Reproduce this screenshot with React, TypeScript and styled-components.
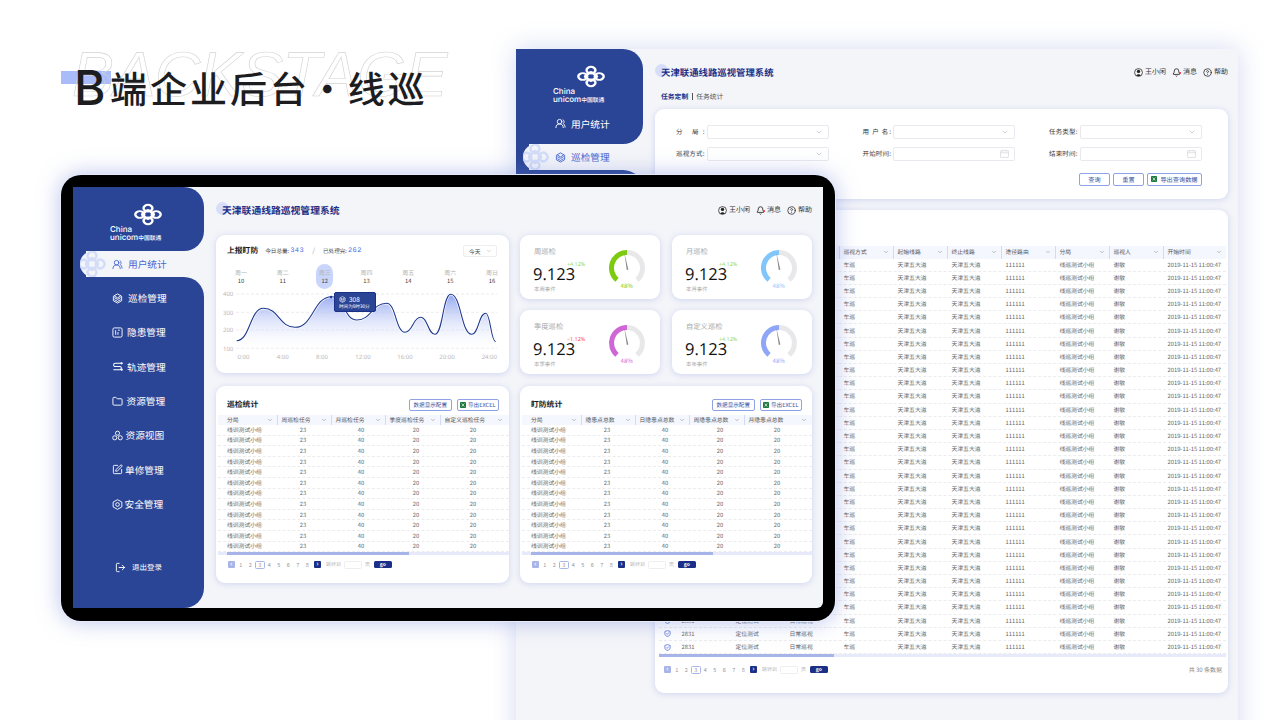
import React from "react";
import styled, { createGlobalStyle } from "styled-components";
import { Bell, ChevronDown, CircleHelp, Folder, LogOut, SquarePen, UsersRound } from "lucide-react";

const BLUE = "#2b4596";
const NAVY = "#1c2f86";
const SCREEN = "#f4f5f9";

/* icons */

const Knot = ({ color = "#fff", width = 30, height = 23 }: { color?: string; width?: number; height?: number }) => (
  <svg width={width} height={height} viewBox="-20 -16 40 32" preserveAspectRatio="none">
    <g transform="scale(1 .8) rotate(45)" fill="none" stroke={color} strokeWidth="3.400">
      <rect x="2" y="2" width="11.500" height="11.500" rx="5.500" />
      <rect x="-13.500" y="2" width="11.500" height="11.500" rx="5.500" />
      <rect x="2" y="-13.500" width="11.500" height="11.500" rx="5.500" />
      <rect x="-13.500" y="-13.500" width="11.500" height="11.500" rx="5.500" />
      <rect x="-6" y="-6" width="12" height="12" rx="2" />
    </g>
  </svg>
);

const CubeIcon = ({ size = 11 }: { size?: number }) => (
  <svg width={size} height={size} viewBox="0 0 24 24" fill="none" stroke="currentColor" strokeWidth="2">
    <path d="M12 2l9 5v10l-9 5-9-5V7z" />
    <path d="M5 10l7 4 7-4M5 14.500l7 4 7-4M5 6.500l7 4 7-4" />
  </svg>
);

const BarsIcon = () => (
  <svg width="11" height="11" viewBox="0 0 24 24" fill="none" stroke="currentColor" strokeWidth="2">
    <rect x="2" y="2" width="20" height="20" rx="3" />
    <path d="M8 7v10M13 11v6M13 7h4" />
  </svg>
);

const RouteIcon = () => (
  <svg width="11" height="11" viewBox="0 0 24 24" fill="none" stroke="currentColor" strokeWidth="2.200">
    <path d="M21 5H7a3.500 3.500 0 0 0 0 7h10a3.500 3.500 0 0 1 0 7H3" />
    <circle cx="21" cy="5" r="1.400" fill="currentColor" />
    <circle cx="21" cy="19" r="1.400" fill="currentColor" />
  </svg>
);

const ViewIcon = () => (
  <svg width="11" height="11" viewBox="0 0 24 24" fill="none" stroke="currentColor" strokeWidth="2">
    <circle cx="12" cy="7" r="4.500" />
    <circle cx="6" cy="17" r="4.500" />
    <circle cx="18" cy="17" r="4.500" />
  </svg>
);

const ShieldGearIcon = () => (
  <svg width="11" height="11" viewBox="0 0 24 24" fill="none" stroke="currentColor" strokeWidth="2">
    <path d="M12 1.500l9.500 5.200v10.600L12 22.500l-9.500-5.200V6.700z" />
    <circle cx="12" cy="12" r="4" />
  </svg>
);

const UserBadge = () => (
  <svg width="9" height="9" viewBox="0 0 24 24">
    <circle cx="12" cy="12" r="10.500" fill="none" stroke="#222" strokeWidth="2" />
    <circle cx="12" cy="9" r="4.500" fill="#222" />
    <path d="M6 21c1-6 11-6 12 0z" fill="#222" />
  </svg>
);

const ExcelIcon = () => (
  <svg width="6" height="6" viewBox="0 0 12 12">
    <rect width="12" height="12" rx="1.500" fill="#1f7a3f" />
    <path d="M3.500 3l5 6M8.500 3l-5 6" stroke="#fff" strokeWidth="1.400" />
  </svg>
);

const CheckShield = () => (
  <svg width="7" height="7" viewBox="0 0 24 24" fill="none" stroke="#4a68d4" strokeWidth="2.600">
    <path d="M12 2l9 3v8c0 5-4 8-9 9-5-1-9-4-9-9V5z" />
    <path d="M8 12l3 3 5-6" />
  </svg>
);

const CalendarIcon = () => (
  <svg width="9" height="9" viewBox="0 0 24 24" fill="none" stroke="#c9ccd4" strokeWidth="1.600">
    <rect x="2" y="5" width="20" height="17" />
    <path d="M2 10h20M7 2v4M17 2v4" />
  </svg>
);

/* sidebar */

const LogoMark = () => (
  <Logo>
    <KnotSlot>
      <Knot />
    </KnotSlot>
    <LogoChina>China</LogoChina>
    <LogoUnicom>
      unicom<small>中国联通</small>
    </LogoUnicom>
  </Logo>
);

const NavRow = ({ icon, label, gap = 5, active }: { icon: React.ReactNode; label: string; gap?: number; active?: boolean }) =>
  active ? (
    <ActiveBand>
      <ActivePill>
        <Watermark>
          <Knot color="#d3dcf8" width={30} height={30} />
        </Watermark>
        <NavIcon>{icon}</NavIcon>
        <span>{label}</span>
      </ActivePill>
    </ActiveBand>
  ) : (
    <NavItem $gap={gap}>
      <NavIcon>{icon}</NavIcon>
      <span>{label}</span>
    </NavItem>
  );

const TopBar = () => (
  <Links>
    <LinkItem>
      <UserBadge />
      王小闲
    </LinkItem>
    <LinkItem>
      <BellWrap>
        <Bell size={9} color="#222" strokeWidth={2.200} />
        <RedDot />
      </BellWrap>
      消息
    </LinkItem>
    <LinkItem>
      <CircleHelp size={9} color="#222" strokeWidth={2} />
      帮助
    </LinkItem>
  </Links>
);

/* filter */

const FilterField = ({ label, date }: { label: string; date?: boolean }) => (
  <FieldGroup>
    <FieldLabel>{label}</FieldLabel>
    <Field>{date ? <CalendarIcon /> : <ChevronDown size={8} color="#b5b8c0" />}</Field>
  </FieldGroup>
);

/* tables */

const HeadChevron = () => <ChevronDown size={6} color="#999" strokeWidth={2.500} />;

const DataTable = ({
  cols,
  bodyCols,
  head,
  rows,
  rowHeight,
  centered,
}: {
  cols: string;
  bodyCols?: string;
  head: string[];
  rows: React.ReactNode[][];
  rowHeight: number;
  centered?: boolean;
}) => (
  <div>
    <HeadRow $cols={cols} $height={rowHeight < 12 ? 10 : 12.500}>
      {head.map((h, i) => (
        <HeadCell key={i} $first={i === 0}>
          <span>{h}</span>
          {h && <HeadChevron />}
        </HeadCell>
      ))}
    </HeadRow>
    {rows.map((r, i) => (
      <BodyRow key={i} $cols={bodyCols ?? cols} $height={rowHeight}>
        {r.map((c, j) => (
          <BodyCell key={j} $center={!!centered && j > 0} $first={centered ? j === 0 : false}>
            {c}
          </BodyCell>
        ))}
      </BodyRow>
    ))}
  </div>
);

const Pagination = () => (
  <Pager>
    <PageArrow $dark={false}>‹</PageArrow>
    {[1, 2, 3, 4, 5, 6, 7, 8].map((n) => (
      <PageNum key={n} $current={n === 3}>
        {n}
      </PageNum>
    ))}
    <PageArrow $dark>›</PageArrow>
    <JumpLabel>跳转到</JumpLabel>
    <JumpInput />
    <JumpLabel>页</JumpLabel>
    <GoButton>go</GoButton>
  </Pager>
);

const ScrollBar = ({ inset, thumb }: { inset: number; thumb: number }) => (
  <Track>
    <Thumb style={{ marginLeft: inset, width: thumb }} />
  </Track>
);

const TableCard = ({ title, head }: { title: string; head: string[] }) => (
  <Card>
    <TableHead>
      <CardTitle>{title}</CardTitle>
      <HeadButtons>
        <OutlineButton>数据显示配置</OutlineButton>
        <OutlineButton>
          <ExcelIcon />
          导出EXCEL
        </OutlineButton>
      </HeadButtons>
    </TableHead>
    <TableInset>
      <DataTable
        cols="59px 54px 54px 55px 67px"
        bodyCols="59px 52px 64px 46px 68px"
        head={head}
        rowHeight={10.600}
        centered
        rows={Array.from({ length: 12 }, () => ["线训测试小组", "23", "40", "20", "20"])}
      />
      <ScrollBar inset={9} thumb={182} />
    </TableInset>
    <PagerSlot>
      <Pagination />
    </PagerSlot>
  </Card>
);

/* chart */

const curve: [number, number][] = [
  [236.700, 340.700], [263.300, 308.300], [295, 327.300], [331.700, 296.700], [356.700, 320], [386.700, 303.300],
  [405, 332.300], [420.700, 317.300], [435, 334.300], [450.700, 294.300], [471.700, 334.300], [485.700, 313.300], [495.700, 341.700],
];

const curvePath = curve.reduce((d, [x, y], i) => {
  if (i === 0) return `M${x} ${y}`;
  const [px, py] = curve[i - 1];
  const h = (x - px) / 2;
  return `${d} C${px + h} ${py} ${x - h} ${y} ${x} ${y}`;
}, "");

const Chart = () => (
  <ChartSvg viewBox="216 289 293 76" width="293" height="76">
    <defs>
      <linearGradient id="area" x1="0" y1="0" x2="0" y2="1">
        <stop offset="0" stopColor="#93a7f0" />
        <stop offset="1" stopColor="#ffffff" stopOpacity="0.1" />
      </linearGradient>
    </defs>
    {[[294, "400"], [312.300, "300"], [330, "200"], [348.300, "100"]].map(([y, t]) => (
      <g key={t as string}>
        <line x1="236" x2="497" y1={y} y2={y} stroke="#e3e3e6" strokeWidth="0.700" strokeDasharray="3 2" />
        <text x="223" y={(y as number) + 2.200} fontSize="6" fill="#b9b9b9">
          {t}
        </text>
      </g>
    ))}
    <path d={`${curvePath} L495.700 350 L236.700 350 Z`} fill="url(#area)" />
    <path d={curvePath} fill="none" stroke="#fff" strokeWidth="2.400" />
    <path d={curvePath} fill="none" stroke="#1f3a8f" strokeWidth="1.100" />
    <circle cx="331" cy="297" r="1.200" fill="#1f3a8f" />
    {[["0:00", 243.500], ["4:00", 282.700], ["8:00", 322], ["12:00", 363], ["16:00", 405], ["20:00", 447], ["24:00", 489.300]].map(([t, x]) => (
      <text key={t as string} x={x} y="359" fontSize="6" fill="#b9b9b9" textAnchor="middle">
        {t}
      </text>
    ))}
  </ChartSvg>
);

const Gauge = ({ color }: { color: string }) => (
  <svg width="40" height="40" viewBox="0 0 40 40">
    <path d="M20 4.500A15.500 15.500 0 0 1 29.970 31.870" fill="none" stroke="#e8e8ea" strokeWidth="5" />
    <path d="M10.030 31.870A15.500 15.500 0 0 1 20 4.500" fill="none" stroke={color} strokeWidth="5" />
    <polygon points="17.300,5 19.800,22 21.400,21.600" fill="#8a8a8a" />
  </svg>
);

const StatCard = ({ title, foot, delta, color, down }: { title: string; foot: string; delta: string; color: string; down?: boolean }) => (
  <StatBox>
    <div>
      <StatTitle>{title}</StatTitle>
      <StatValue>
        9.123
        <StatDelta $down={!!down}>{delta}</StatDelta>
      </StatValue>
      <StatFoot>{foot}</StatFoot>
    </div>
    <GaugeCol>
      <Gauge color={color} />
      <GaugePct $color={color}>48%</GaugePct>
    </GaugeCol>
  </StatBox>
);

const week = [["周一", 10], ["周二", 11], ["周三", 12], ["周四", 13], ["周五", 14], ["周六", 15], ["周日", 16]];

const backRows = Array.from({ length: 30 }, () => [
  <CheckShield key="c" />, "2831", "定位测试", "日常巡视", "车巡", "天津五大道", "天津五大道", "111111", "线巡测试小组", "谢敏", "2019-11-15 11:00:47",
]);

const App = () => (
  <>
    <GlobalStyle />
    <Canvas>
      <Heading>
        <HeadingBar />
        <HeadingGhost>BACKSTAGE</HeadingGhost>
        <HeadingText>
          <HeadingLatin>B</HeadingLatin>端企业后台 · 线巡
        </HeadingText>
      </Heading>

      <BackWindow>
        <BackSide>
          <SideTop $height={95}>
            <LogoMark />
            <BackFirstItem>
              <NavRow icon={<UsersRound size={11} />} label="用户统计" />
            </BackFirstItem>
          </SideTop>
          <NavRow active icon={<CubeIcon />} label="巡检管理" />
          <SideBottom />
        </BackSide>
        <BackMain>
          <PageHeader $height={38}>
            <PageTitle $size={9.400}>天津联通线路巡视管理系统</PageTitle>
            <TopBar />
          </PageHeader>
          <Tabs>
            <TabOn>任务定制</TabOn>
            <TabSep />
            <span>任务统计</span>
          </Tabs>
          <FilterCard>
            <FilterGrid>
              <FilterField label="分 局:" />
              <FilterField label="用 户 名:" />
              <FilterField label="任务类型:" />
              <FilterField label="巡视方式:" />
              <FilterField label="开始时间:" date />
              <FilterField label="结束时间:" date />
            </FilterGrid>
            <FilterActions>
              <ActionButton $width={31}>查询</ActionButton>
              <ActionButton $width={31}>重置</ActionButton>
              <ActionButton $width={55}>
                <ExcelIcon />
                导出查询数据
              </ActionButton>
            </FilterActions>
          </FilterCard>
          <BackTableCard>
            <DataTable
              cols="18px repeat(9, 54px) 63px"
              head={["", "编号", "任务名称", "巡视类型", "巡视方式", "起始线路", "终止线路", "途径路由", "分局", "巡视人", "开始时间"]}
              rows={backRows}
              rowHeight={13.200}
            />
            <ScrollBar inset={0} thumb={175} />
            <BackPagerRow>
              <Pagination />
              <Total>共 30 条数据</Total>
            </BackPagerRow>
          </BackTableCard>
        </BackMain>
      </BackWindow>

      <Tablet>
        <Screen>
          <Side>
            <SideTop $height={64}>
              <LogoMark />
            </SideTop>
            <NavRow active icon={<UsersRound size={11} />} label="用户统计" />
            <SideBottom>
              <NavRow icon={<CubeIcon />} label="巡检管理" />
              <NavRow icon={<BarsIcon />} label="隐患管理" gap={4} />
              <NavRow icon={<RouteIcon />} label="轨迹管理" gap={4} />
              <NavRow icon={<Folder size={11} />} label="资源管理" gap={3.500} />
              <NavRow icon={<ViewIcon />} label="资源视图" gap={2.500} />
              <NavRow icon={<SquarePen size={11} />} label="单修管理" gap={2} />
              <NavRow icon={<ShieldGearIcon />} label="安全管理" gap={1.500} />
              <LogoutRow>
                <LogOut size={11} />
                退出登录
              </LogoutRow>
            </SideBottom>
          </Side>
          <Main>
            <PageHeader $height={48}>
              <PageTitle $size={9.800}>天津联通线路巡视管理系统</PageTitle>
              <TopBar />
            </PageHeader>
            <TopGrid>
              <ChartCard>
                <ChartHead>
                  <CardTitle>上报盯防</CardTitle>
                  <Meta>今日总量:</Meta>
                  <MetaValue>343</MetaValue>
                  <MetaSlash>/</MetaSlash>
                  <Meta>已处理完:</Meta>
                  <MetaValue>262</MetaValue>
                  <RangeSelect>
                    今天
                    <ChevronDown size={6} color="#aaa" />
                  </RangeSelect>
                </ChartHead>
                <Week>
                  {week.map(([d, n]) => (
                    <Day key={d} $on={n === 12}>
                      <DayName>{d}</DayName>
                      <DayNum>{n}</DayNum>
                    </Day>
                  ))}
                </Week>
                <Chart />
                <Tip>
                  <TipTop>
                    <CubeIcon size={7} />
                    308
                  </TipTop>
                  <TipSub>时间为9时30分</TipSub>
                </Tip>
              </ChartCard>
              <StatGrid>
                <StatCard title="周巡检" foot="本周事件" delta="+4.12%" color="#7ccb0f" />
                <StatCard title="月巡检" foot="本月事件" delta="+4.12%" color="#80c6fa" />
                <StatCard title="季度巡检" foot="本季事件" delta="−1.12%" color="#cf66d6" down />
                <StatCard title="自定义巡检" foot="本年事件" delta="+4.12%" color="#8ea5f8" />
              </StatGrid>
            </TopGrid>
            <BottomGrid>
              <TableCard title="巡检统计" head={["分局", "周巡检任务", "月巡检任务", "季度巡检任务", "自定义巡检任务"]} />
              <TableCard title="盯防统计" head={["分局", "隐患点总数", "日隐患点总数", "周隐患点总数", "月隐患点总数"]} />
            </BottomGrid>
          </Main>
        </Screen>
      </Tablet>
    </Canvas>
  </>
);

/**
 * styles
 */

const GlobalStyle = createGlobalStyle`
  html, body {
    margin: 0;
    background: #fff;
    font-family: "Noto Sans CJK SC", "Noto Sans", sans-serif;
    text-rendering: geometricPrecision;
  }
`;

const Canvas = styled.div`
  position: relative;
  width: 1280px;
  height: 720px;
  overflow: hidden;
  background: #fff;
  opacity: 0.999;
`;

const Heading = styled.div`
  position: absolute;
  left: 61px;
  top: 50px;
  width: 400px;
  height: 70px;
`;

const HeadingBar = styled.div`
  position: absolute;
  left: 0;
  top: 21px;
  width: 50px;
  height: 13px;
  background: #a9bcf9;
`;

const HeadingGhost = styled.div`
  position: absolute;
  left: 11px;
  top: -11px;
  font-family: "Liberation Sans", sans-serif;
  font-style: italic;
  font-size: 63px;
  line-height: 72px;
  letter-spacing: -0.600px;
  color: transparent;
  -webkit-text-stroke: 0.600px #d2d2d2;
  white-space: nowrap;
`;

const HeadingText = styled.div`
  position: absolute;
  left: 13px;
  top: 10px;
  font-size: 37px;
  line-height: 54px;
  font-weight: 500;
  letter-spacing: 3px;
  word-spacing: -12.500px;
  color: #1d1d1f;
  white-space: nowrap;
`;

const HeadingLatin = styled.span`
  display: inline-block;
  position: relative;
  top: 2px;
  width: 36px;
  font-family: "Inter", sans-serif;
  font-size: 48px;
  line-height: 40px;
  font-weight: 500;
  letter-spacing: 0;
`;

const Tablet = styled.div`
  position: absolute;
  left: 61px;
  top: 175px;
  width: 750px;
  height: 421px;
  padding: 12px 12px 13px;
  background: #000;
  border-radius: 20px;
  box-shadow: 0 0 0 1px #e4e9fb, 0 0 22px rgba(110, 130, 215, 0.5);
`;

const Screen = styled.div`
  display: flex;
  width: 750px;
  height: 421px;
  background: ${SCREEN};
  border-radius: 0 0 6px 0;
  overflow: hidden;
`;

const Side = styled.div`
  width: 131px;
  flex: none;
  display: flex;
  flex-direction: column;
`;

const BackWindow = styled.div`
  position: absolute;
  left: 516px;
  top: 49px;
  width: 722px;
  height: 700px;
  display: flex;
  align-items: flex-start;
  background: ${SCREEN};
  box-shadow: 0 0 24px rgba(120, 140, 215, 0.32);
`;

const BackSide = styled(Side)`
  width: 127px;
  height: 500px;
`;

const SideTop = styled.div<{ $height: number }>`
  height: ${(p) => p.$height}px;
  padding-top: 16px;
  box-sizing: border-box;
  position: relative;
  background: ${BLUE};
  border-radius: 0 20px 20px 0;
  border-bottom-left-radius: 0;
`;

const SideBottom = styled.div`
  flex: 1;
  padding-top: 4px;
  background: ${BLUE};
  border-radius: 0 20px 20px 0;
`;

const BackFirstItem = styled.div`
  position: absolute;
  left: 0;
  right: 0;
  bottom: 3px;
`;

const Logo = styled.div`
  width: 53px;
  margin-left: 37px;
  color: #fff;
  font-family: "Inter", sans-serif;
  font-weight: 500;
`;

const KnotSlot = styled.div`
  display: flex;
  justify-content: flex-end;
  height: 22px;
`;

const LogoChina = styled.div`
  font-size: 8px;
  line-height: 7px;
  margin-top: 1px;
`;

const LogoUnicom = styled.div`
  font-size: 8px;
  line-height: 8px;
  white-space: nowrap;

  small {
    font-family: "Noto Sans CJK SC", sans-serif;
    font-size: 5.800px;
  }
`;

const NavIcon = styled.span`
  display: flex;
  width: 11px;
  height: 11px;
  flex: none;
`;

const NavItem = styled.div<{ $gap: number }>`
  height: 34.330px;
  padding-left: 39px;
  display: flex;
  align-items: center;
  gap: ${(p) => p.$gap}px;
  font-size: 9.700px;
  color: #fff;
  white-space: nowrap;
`;

const LogoutRow = styled.div`
  height: 34px;
  margin-top: 29px;
  padding-left: 42px;
  display: flex;
  align-items: center;
  gap: 6px;
  font-size: 7.500px;
  color: #fff;
`;

const ActiveBand = styled.div`
  height: 26px;
  flex: none;
  padding-left: 7px;
  background: linear-gradient(90deg, ${BLUE} 13px, ${SCREEN} 13px);
`;

const ActivePill = styled.div`
  position: relative;
  height: 26px;
  padding-left: 32px;
  display: flex;
  align-items: center;
  gap: 5px;
  overflow: hidden;
  font-size: 9.700px;
  color: #4a68d4;
  white-space: nowrap;
  background: ${SCREEN};
  border-radius: 13px 0 0 13px;
`;

const Watermark = styled.div`
  position: absolute;
  left: -3px;
  top: -2px;
`;

const Main = styled.div`
  flex: 1;
  padding: 0 11px 0 12px;
`;

const BackMain = styled.div`
  flex: 1;
  min-width: 0;
  padding: 0 10px 0 12px;
`;

const PageHeader = styled.div<{ $height: number }>`
  height: ${(p) => p.$height}px;
  padding-top: 15px;
  box-sizing: border-box;
  display: flex;
  justify-content: space-between;
  align-items: flex-start;
`;

const PageTitle = styled.div<{ $size: number }>`
  position: relative;
  isolation: isolate;
  margin-left: 6px;
  font-size: ${(p) => p.$size}px;
  line-height: 16px;
  font-weight: 700;
  color: ${NAVY};
  white-space: nowrap;

  &::before {
    content: "";
    position: absolute;
    z-index: -1;
    left: -6px;
    top: 0;
    width: 13px;
    height: 13px;
    border-radius: 50%;
    background: #d7def9;
  }
`;

const Links = styled.div`
  display: flex;
  gap: 6px;
  padding-top: 3px;
`;

const LinkItem = styled.div`
  display: flex;
  align-items: center;
  gap: 2px;
  font-size: 7px;
  line-height: 10px;
  color: #333;
`;

const BellWrap = styled.span`
  position: relative;
  display: flex;
`;

const RedDot = styled.i`
  position: absolute;
  right: 0;
  top: 4px;
  width: 2px;
  height: 2px;
  border-radius: 50%;
  background: #f22;
`;

const Tabs = styled.div`
  height: 20px;
  margin: 2px 0 0 6px;
  display: flex;
  align-items: flex-start;
  gap: 3.500px;
  font-size: 6.800px;
  line-height: 14px;
  color: #555;
`;

const TabOn = styled.span`
  font-weight: 700;
  color: ${NAVY};
`;

const TabSep = styled.i`
  width: 1px;
  height: 7px;
  margin: 3.500px 0 0;
  background: #555;
`;

const Card = styled.div`
  position: relative;
  background: #fff;
  border-radius: 9px;
  box-shadow: 0 1px 6px rgba(125, 145, 220, 0.32);
`;

const FilterCard = styled(Card)`
  height: 90px;
  padding: 16px 26px 0 21px;
  box-sizing: border-box;
`;

const FilterGrid = styled.div`
  display: grid;
  grid-template-columns: 186.500px 186.500px 1fr;
  row-gap: 8.500px;
`;

const FieldGroup = styled.div`
  display: flex;
  gap: 2px;
`;

const FieldLabel = styled.div`
  width: 28.500px;
  font-size: 6.500px;
  line-height: 13.500px;
  color: #333;
  text-align: justify;
  text-align-last: justify;
  white-space: nowrap;
`;

const Field = styled.div`
  width: 122px;
  height: 13.500px;
  box-sizing: border-box;
  padding-right: 5px;
  display: flex;
  align-items: center;
  justify-content: flex-end;
  background: #fff;
  border: 1px solid #e8e9ee;
  border-radius: 2px;
`;

const FilterActions = styled.div`
  margin: 12px 0 0;
  display: flex;
  justify-content: flex-end;
  gap: 3px;
`;

const ActionButton = styled.div<{ $width: number }>`
  width: ${(p) => p.$width}px;
  height: 13px;
  box-sizing: border-box;
  display: flex;
  align-items: center;
  justify-content: center;
  gap: 3px;
  font-size: 6.200px;
  color: #3a4f9f;
  background: #fff;
  border: 1px solid #8fa2e6;
  border-radius: 2px;
  white-space: nowrap;
`;

const BackTableCard = styled(Card)`
  margin-top: 11px;
  height: 483px;
  padding: 36px 2px 0 4px;
  box-sizing: border-box;
`;

const BackPagerRow = styled.div`
  margin-top: 8px;
  padding: 0 4px 0 5px;
  display: flex;
  justify-content: space-between;
  align-items: center;
`;

const Total = styled.div`
  font-size: 6px;
  line-height: 8px;
  color: #888;
`;

const TopGrid = styled.div`
  display: grid;
  grid-template-columns: 293px 292px;
  column-gap: 11px;
  height: 138.500px;
`;

const ChartCard = styled(Card)`
  height: 138px;
`;

const ChartHead = styled.div`
  height: 29px;
  padding: 10px 12px 0 11px;
  box-sizing: border-box;
  display: flex;
  align-items: flex-start;
`;

const CardTitle = styled.div`
  font-size: 7.800px;
  line-height: 12px;
  font-weight: 700;
  color: #1a1a1a;
  white-space: nowrap;
`;

const Meta = styled.div`
  font-size: 5.600px;
  line-height: 12px;
  color: #444;
  margin-left: 7px;
  white-space: nowrap;
`;

const MetaValue = styled.div`
  font-family: "Liberation Mono", monospace;
  font-size: 7px;
  line-height: 12px;
  letter-spacing: 0.500px;
  color: #3f68e8;
  margin-left: 1px;
`;

const MetaSlash = styled.div`
  font-size: 7px;
  line-height: 12px;
  color: #aaa;
  margin-left: 8px;
  margin-right: 1px;
`;

const RangeSelect = styled.div`
  width: 34px;
  height: 12px;
  margin-left: auto;
  padding: 0 4px 0 5px;
  box-sizing: border-box;
  display: flex;
  align-items: center;
  justify-content: space-between;
  font-size: 5.800px;
  color: #444;
  border: 1px solid #eee;
  border-radius: 2px;
`;

const Week = styled.div`
  height: 25px;
  padding: 0 8.500px 0 16.500px;
  display: flex;
  justify-content: space-between;
`;

const Day = styled.div<{ $on: boolean }>`
  width: 17px;
  padding-top: 5px;
  box-sizing: border-box;
  text-align: center;
  border-radius: 9px;
  background: ${(p) => (p.$on ? "#c9d5fa" : "transparent")};
`;

const DayName = styled.div`
  font-size: 6px;
  line-height: 8px;
  color: #b5b5b5;
  white-space: nowrap;
`;

const DayNum = styled.div`
  font-size: 5.800px;
  line-height: 7px;
  color: #444;
`;

const ChartSvg = styled.svg`
  display: block;
  font-family: "Noto Sans", sans-serif;
`;

const Tip = styled.div`
  position: absolute;
  left: 118px;
  top: 57px;
  width: 42px;
  height: 20px;
  padding: 1.500px 0 0 4px;
  box-sizing: border-box;
  color: #fff;
  background: ${BLUE};
  border: 1px solid ${NAVY};
  border-radius: 2px;
`;

const TipTop = styled.div`
  display: flex;
  align-items: center;
  gap: 3px;
  font-size: 6.500px;
  line-height: 9px;
`;

const TipSub = styled.div`
  font-size: 4.600px;
  line-height: 7px;
  white-space: nowrap;
`;

const StatGrid = styled.div`
  display: grid;
  grid-template-columns: 140px 140px;
  grid-template-rows: 63.500px 64px;
  gap: 11.500px 12px;
`;

const StatBox = styled(Card)`
  padding: 11.500px 13.300px 0 14px;
  box-sizing: border-box;
  display: flex;
  justify-content: space-between;
`;

const StatTitle = styled.div`
  font-size: 7.300px;
  line-height: 10px;
  color: #a8a8a8;
  white-space: nowrap;
`;

const StatValue = styled.div`
  position: relative;
  margin: 8px 0 0 -1px;
  font-family: "Open Sans", sans-serif;
  font-size: 16.500px;
  line-height: 17px;
  color: #111;
`;

const StatDelta = styled.span<{ $down: boolean }>`
  position: absolute;
  left: 34px;
  top: -5px;
  font-size: 5.400px;
  line-height: 8px;
  white-space: nowrap;
  color: ${(p) => (p.$down ? "#f33" : "#86d13b")};
`;

const StatFoot = styled.div`
  margin-top: 3.500px;
  font-size: 5.400px;
  line-height: 8px;
  color: #aaa;
`;

const GaugeCol = styled.div`
  margin-top: 1.800px;
  display: flex;
  flex-direction: column;
  align-items: center;
`;

const GaugePct = styled.div<{ $color: string }>`
  margin-top: -6px;
  font-size: 6px;
  line-height: 8px;
  color: ${(p) => p.$color};
`;

const BottomGrid = styled.div`
  margin-top: 12.500px;
  display: grid;
  grid-template-columns: 293px 292px;
  grid-auto-rows: 197px;
  column-gap: 11px;
`;

const TableHead = styled.div`
  height: 29px;
  padding: 12.500px 10px 0 11px;
  box-sizing: border-box;
  display: flex;
  justify-content: space-between;
`;

const HeadButtons = styled.div`
  display: flex;
  gap: 5px;
`;

const OutlineButton = styled.div`
  width: 42.500px;
  height: 12px;
  box-sizing: border-box;
  display: flex;
  align-items: center;
  justify-content: center;
  gap: 2px;
  font-size: 5.600px;
  color: #3a4f9f;
  border: 1px solid #8fa2e6;
  border-radius: 2px;
  white-space: nowrap;
`;

const TableInset = styled.div`
  padding: 0 0 0 2px;
`;

const HeadRow = styled.div<{ $cols: string; $height: number }>`
  height: ${(p) => p.$height}px;
  display: grid;
  grid-template-columns: ${(p) => p.$cols};
  background: #f5f7fe;
`;

const HeadCell = styled.div<{ $first: boolean }>`
  padding: 0 4px 0 ${(p) => (p.$first ? 9 : 4.500)}px;
  display: flex;
  align-items: center;
  justify-content: space-between;
  font-size: 5.800px;
  line-height: 8px;
  color: #555;
  white-space: nowrap;
  box-shadow: ${(p) => (p.$first ? "none" : "inset 1px 0 0 #d3daf3")};
`;

const BodyRow = styled.div<{ $cols: string; $height: number }>`
  height: ${(p) => p.$height}px;
  box-sizing: border-box;
  display: grid;
  grid-template-columns: ${(p) => p.$cols};
  border-bottom: 1px dashed #ececef;
`;

const BodyCell = styled.div<{ $center: boolean; $first: boolean }>`
  display: flex;
  align-items: center;
  justify-content: ${(p) => (p.$center ? "center" : "flex-start")};
  padding-left: ${(p) => (p.$center ? 0 : p.$first ? 9 : 4.500)}px;
  font-size: 5.800px;
  line-height: 8px;
  color: #666;
  white-space: nowrap;
`;

const Track = styled.div`
  height: 2.500px;
  background: #e6eafa;
`;

const Thumb = styled.div`
  height: 100%;
  background: #a7b4e8;
`;

const PagerSlot = styled.div`
  padding: 5px 0 0 12px;
`;

const Pager = styled.div`
  display: flex;
  align-items: center;
  height: 10px;
`;

const PageArrow = styled.div<{ $dark: boolean }>`
  width: 7px;
  height: 7px;
  margin-right: ${(p) => (p.$dark ? 5 : 1)}px;
  margin-left: ${(p) => (p.$dark ? 2 : 0)}px;
  display: flex;
  align-items: center;
  justify-content: center;
  font-size: 7px;
  line-height: 7px;
  font-weight: 700;
  color: #fff;
  background: ${(p) => (p.$dark ? NAVY : "#a9b5e8")};
  border-radius: 1px;
`;

const PageNum = styled.div<{ $current: boolean }>`
  width: 9.500px;
  height: 8px;
  box-sizing: border-box;
  display: flex;
  align-items: center;
  justify-content: center;
  font-size: 5.500px;
  line-height: 6px;
  color: #999;
  border: ${(p) => (p.$current ? "1px solid #a9b5e8" : "1px solid transparent")};
  border-radius: 1.500px;
`;

const JumpLabel = styled.div`
  font-size: 5px;
  line-height: 6px;
  color: #bbb;
  white-space: nowrap;
`;

const JumpInput = styled.div`
  width: 18px;
  height: 8px;
  margin: 0 3px;
  border: 1px solid #eee;
  box-sizing: border-box;
  border-radius: 1.500px;
`;

const GoButton = styled.div`
  width: 17.500px;
  height: 7.500px;
  margin-left: 4px;
  display: flex;
  align-items: center;
  justify-content: center;
  font-size: 5px;
  line-height: 7px;
  font-weight: 700;
  color: #fff;
  background: ${NAVY};
  border-radius: 1.500px;
`;

export default App;
